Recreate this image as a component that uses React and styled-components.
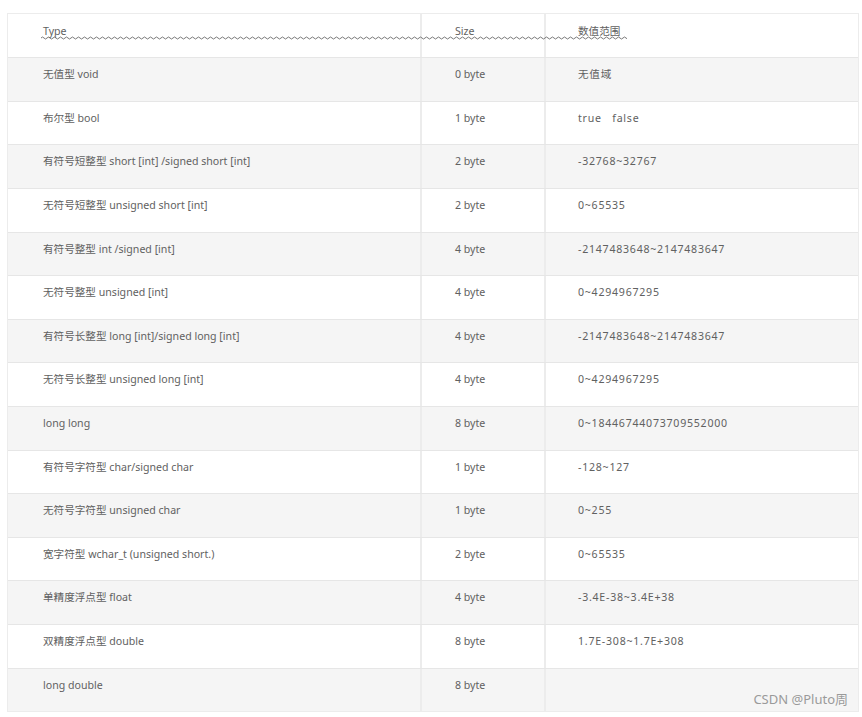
import React from 'react'
import styled, { createGlobalStyle } from 'styled-components'

const GlobalStyle = createGlobalStyle`
    body {
        margin: 0;
        background: #ffffff;
        font-family: "Noto Sans", "Noto Sans CJK SC", sans-serif;
    }
`

const Page = styled.div`
    width: 862px;
    height: 717px;
    padding: 13px 3px 0 7px;
    box-sizing: border-box;
    position: relative;
    overflow: hidden;
`

const Table = styled.div`
    width: 852px;
    border: 1px solid #ececec;
    box-sizing: border-box;
`

const Row = styled.div`
    display: grid;
    grid-template-columns: 412px 124px 1fr;
    height: ${p => p.h}px;
    background: ${p => (p.striped ? '#f5f5f5' : '#ffffff')};
    border-top: ${p => (p.first ? 'none' : '1px solid #e6e6e6')};
    box-sizing: border-box;
    position: relative;
`

const Cell = styled.div`
    padding: ${p => (p.head ? 9 : 8)}px 0 0 ${p => p.pad || 35}px;
    font-size: 10.6px;
    line-height: 16px;
    color: #616161;
    border-left: ${p => (p.divider ? '2px solid #ececec' : 'none')};
    white-space: pre;
    letter-spacing: ${p => (p.wide ? '0.75px' : 'normal')};
`

const Wave = styled.svg`
    position: absolute;
    left: 33px;
    top: 22px;
`

const Watermark = styled.div`
    position: absolute;
    right: 14px;
    bottom: 9px;
    font-size: 13px;
    color: #9a9a9a;
`

const rows = [
    ['无值型 void', '0 byte', '无值域'],
    ['布尔型 bool', '1 byte', 'true   false'],
    ['有符号短整型 short [int] /signed short [int]', '2 byte', '-32768~32767'],
    ['无符号短整型 unsigned short [int]', '2 byte', '0~65535'],
    ['有符号整型 int /signed [int]', '4 byte', '-2147483648~2147483647'],
    ['无符号整型 unsigned [int]', '4 byte', '0~4294967295'],
    ['有符号长整型 long [int]/signed long [int]', '4 byte', '-2147483648~2147483647'],
    ['无符号长整型 unsigned long [int]', '4 byte', '0~4294967295'],
    ['long long', '8 byte', '0~18446744073709552000'],
    ['有符号字符型 char/signed char', '1 byte', '-128~127'],
    ['无符号字符型 unsigned char', '1 byte', '0~255'],
    ['宽字符型 wchar_t (unsigned short.)', '2 byte', '0~65535'],
    ['单精度浮点型 float', '4 byte', '-3.4E-38~3.4E+38'],
    ['双精度浮点型 double', '8 byte', '1.7E-308~1.7E+308'],
    ['long double', '8 byte', ''],
]

// squiggle like a spell checker line
const wavePath = () => {
    let d = 'M0 2'
    for (let x = 0; x < 586; x += 6) {
        d += ` Q${x + 1.5} 0 ${x + 3} 2 T${x + 6} 2`
    }
    return d
}

const heights = [44, 43, 44, 44, 43, 44, 43, 44, 44, 43, 44, 43, 44, 44, 43]

function App() {
    return (
        <Page>
            <GlobalStyle />
            <Table>
                <Row h={43} first>
                    <Cell head>Type</Cell>
                    <Cell head divider pad={33}>Size</Cell>
                    <Cell head divider pad={32}>数值范围</Cell>
                    <Wave width="586" height="5" viewBox="0 0 586 5">
                        <path d={wavePath()} fill="none" stroke="#6a6a6a" strokeWidth="0.9" />
                    </Wave>
                </Row>
                {rows.map((r, i) => (
                    <Row key={i} h={heights[i]} striped={i % 2 === 0}>
                        <Cell>{r[0]}</Cell>
                        <Cell divider pad={33}>{r[1]}</Cell>
                        <Cell divider pad={32} wide>{r[2]}</Cell>
                    </Row>
                ))}
            </Table>
            <Watermark>CSDN @Pluto周</Watermark>
        </Page>
    )
}

export default App
